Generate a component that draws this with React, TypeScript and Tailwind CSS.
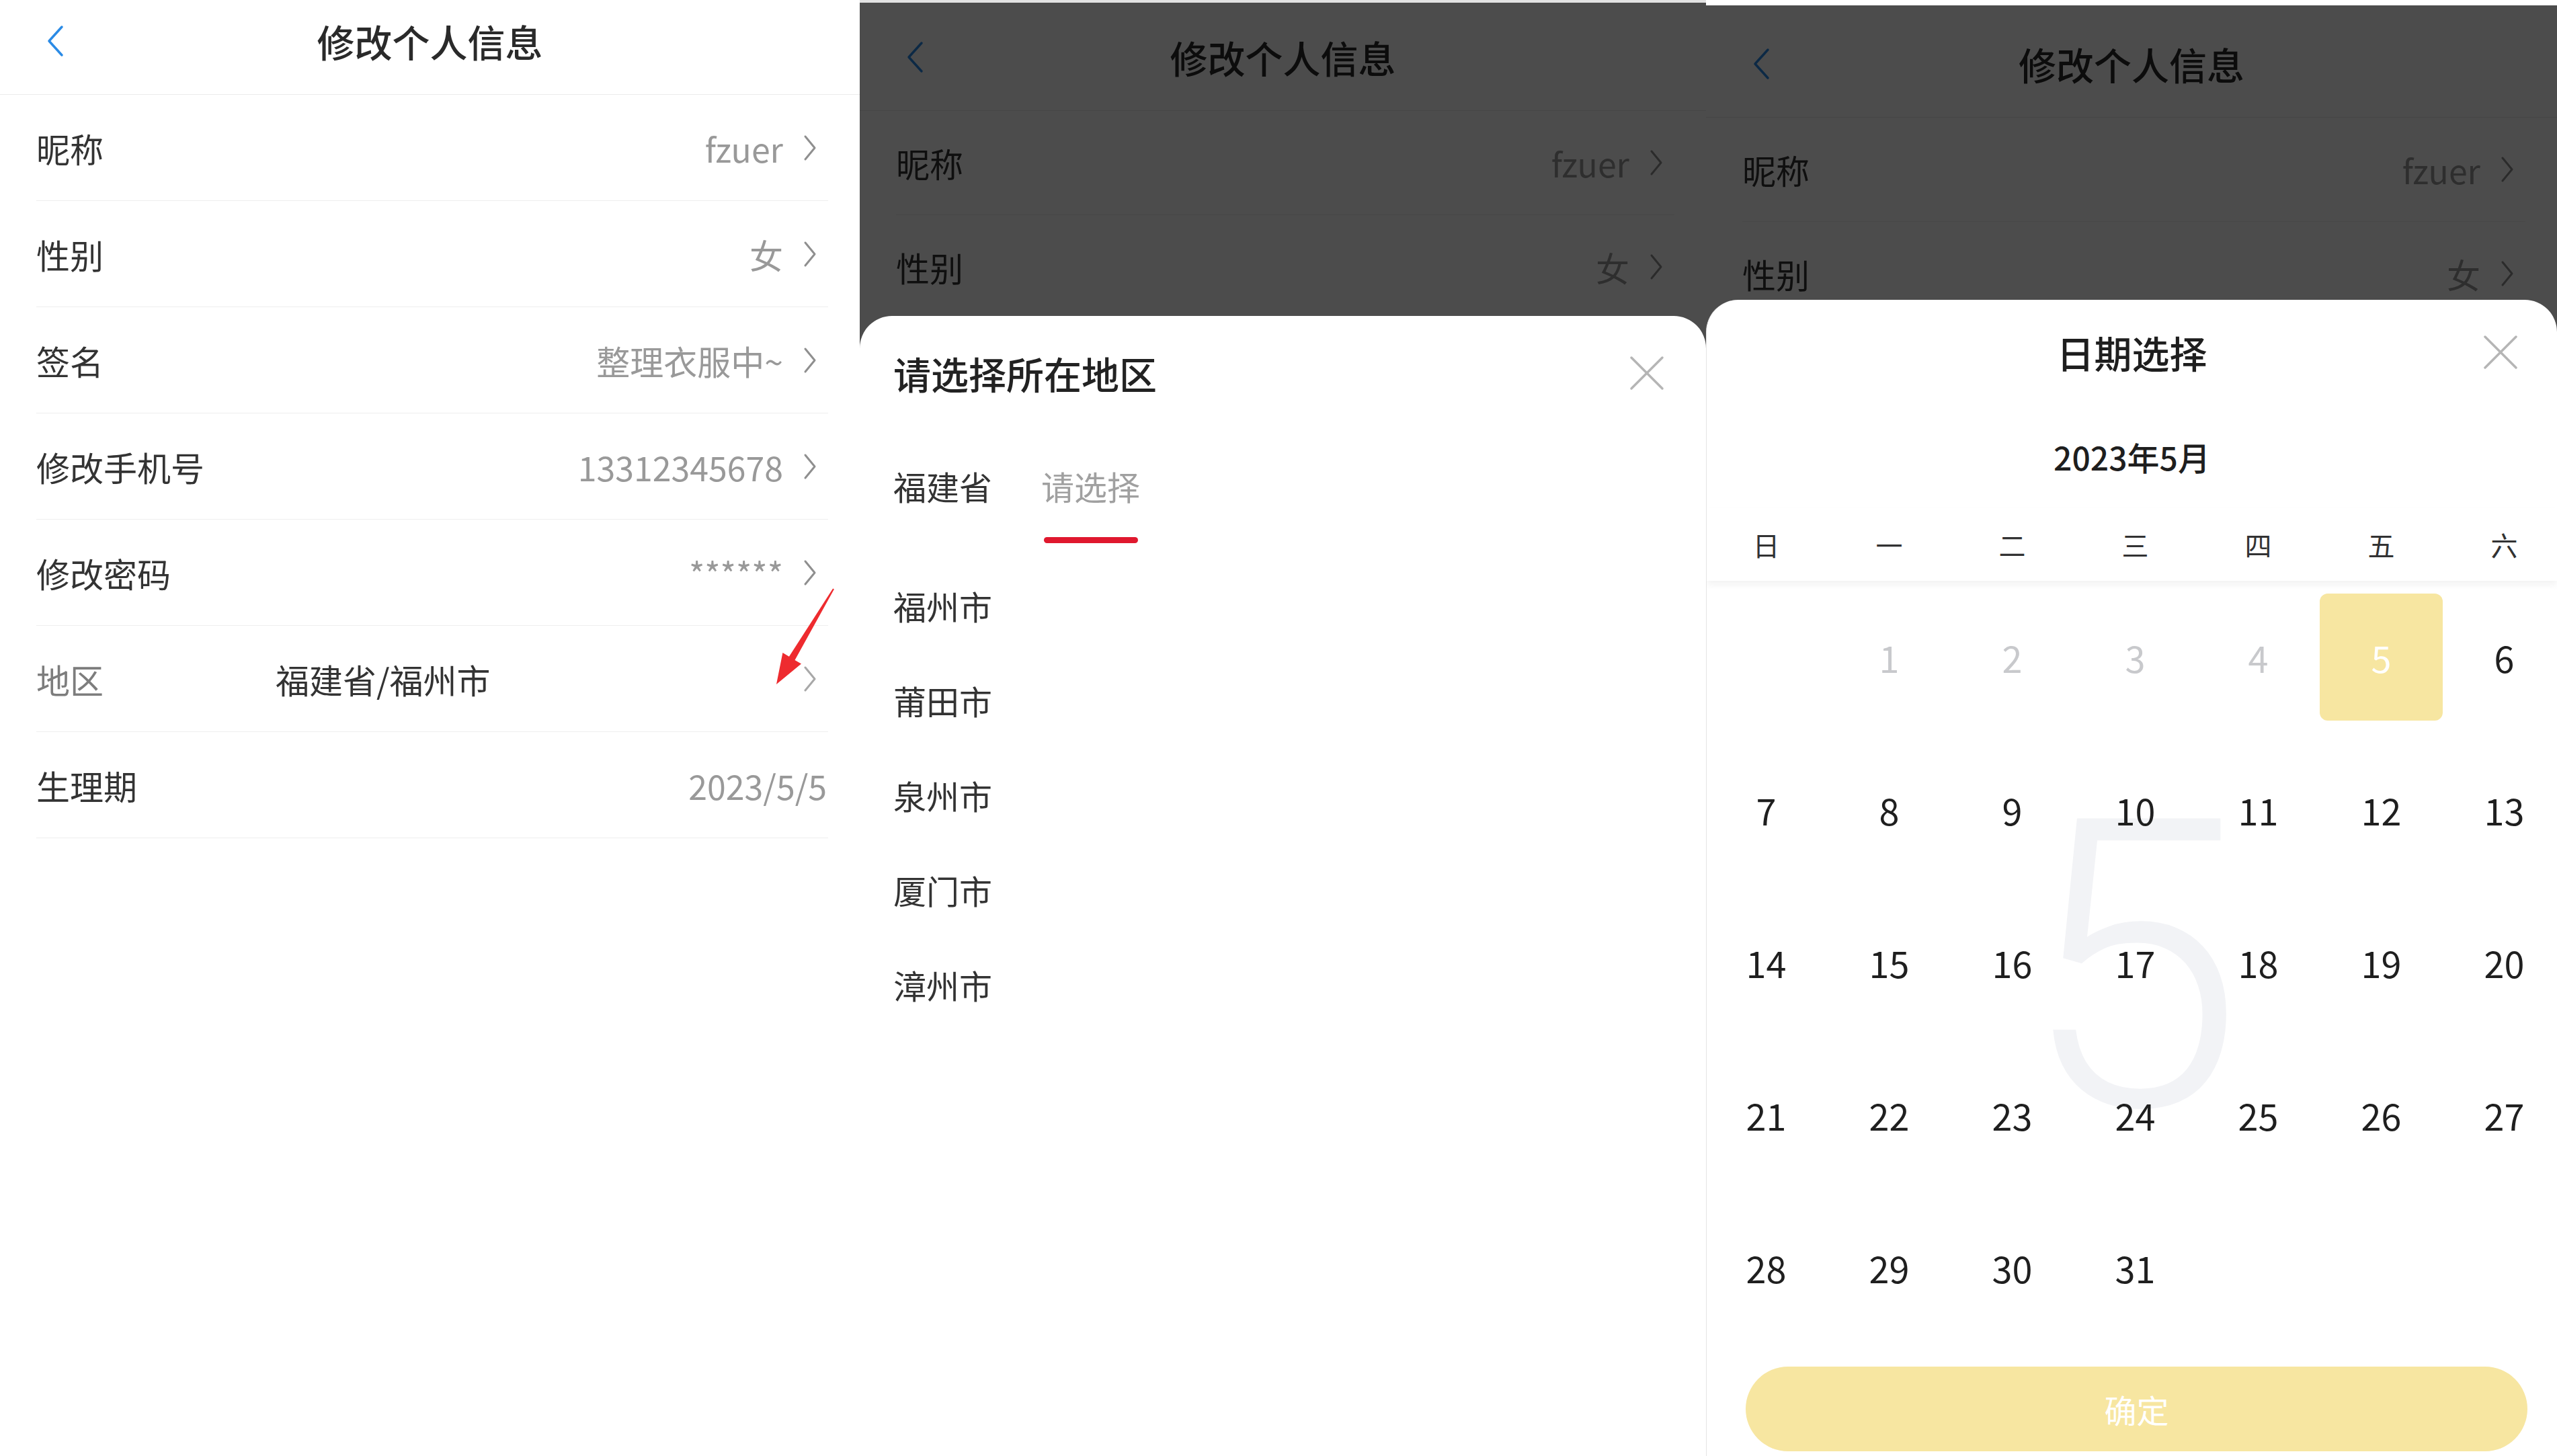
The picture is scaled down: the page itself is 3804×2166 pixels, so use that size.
import React from "react";

type Row = {
  label: string;
  value: string;
  arrow: boolean;
  region?: boolean;
};

const rows: Row[] = [
  { label: "昵称", value: "fzuer", arrow: true },
  { label: "性别", value: "女", arrow: true },
  { label: "签名", value: "整理衣服中~", arrow: true },
  { label: "修改手机号", value: "13312345678", arrow: true },
  { label: "修改密码", value: "******", arrow: true },
  { label: "地区", value: "福建省/福州市", arrow: true, region: true },
  { label: "生理期", value: "2023/5/5", arrow: false },
];

const cities = ["福州市", "莆田市", "泉州市", "厦门市", "漳州市"];
const weekdays = ["日", "一", "二", "三", "四", "五", "六"];

function ChevronRight({ className = "" }: { className?: string }) {
  return (
    <svg viewBox="0 0 20 40" className={`w-[20px] h-[40px] ${className}`} fill="none">
      <polyline points="3,3 17,20 3,37" stroke="currentColor" strokeWidth="3" strokeLinecap="round" strokeLinejoin="round" />
    </svg>
  );
}

function BackChevron() {
  return (
    <svg viewBox="0 0 28 48" className="w-[28px] h-[48px] text-[#2b8be6]" fill="none">
      <polyline points="24,3 5,24 24,45" stroke="currentColor" strokeWidth="3.5" strokeLinecap="round" strokeLinejoin="round" />
    </svg>
  );
}

function CloseIcon() {
  return (
    <svg viewBox="0 0 52 52" className="w-[52px] h-[52px] text-[#b5b5b5]" fill="none">
      <line x1="3" y1="3" x2="49" y2="49" stroke="currentColor" strokeWidth="3.5" strokeLinecap="round" />
      <line x1="49" y1="3" x2="3" y2="49" stroke="currentColor" strokeWidth="3.5" strokeLinecap="round" />
    </svg>
  );
}

// the profile list behind everything; tall = left panel spacing
function ProfilePage({ tall, count }: { tall: boolean; count: number }) {
  return (
    <div className="w-full">
      <div className="grid grid-cols-[1fr_auto_1fr] items-center h-[141px] pb-[18px] border-b border-[#ececec]">
        <div className="pl-[68px] flex items-center">
          <BackChevron />
        </div>
        <div className="text-[56px] font-medium text-[#2a2a2a] leading-none">修改个人信息</div>
        <div />
      </div>
      {rows.slice(0, count).map((r) => (
        <div
          key={r.label}
          className={`ml-[54px] mr-[47px] flex items-center border-b border-[#eeeeee] ${tall ? "h-[158px]" : "h-[155px]"}`}
        >
          <div className={`text-[50px] leading-none ${r.region ? "w-[356px] text-[#7d7d7d]" : "text-[#333333]"}`}>{r.label}</div>
          {r.region ? (
            <div className="flex-1 text-[50px] leading-none text-[#333333]">{r.value}</div>
          ) : (
            <div className="flex-1 text-right text-[50px] leading-none text-[#999999]">{r.value}</div>
          )}
          {r.arrow ? (
            <ChevronRight className={`ml-[30px] mr-[17px] ${r.region ? "text-[#a8a8a8]" : "text-[#8f8f8f]"}`} />
          ) : (
            <div className="w-[2px]" />
          )}
        </div>
      ))}
    </div>
  );
}

function RegionSheet() {
  return (
    <div className="absolute left-0 right-0 top-[470px] bottom-0 bg-white rounded-t-[48px]">
      <div className="flex items-center justify-between h-[170px] pl-[50px] pr-[62px]">
        <div className="text-[56px] font-medium text-[#222222] leading-none">请选择所在地区</div>
        <CloseIcon />
      </div>
      <div className="flex items-start gap-[73px] pl-[50px] pt-[53px] h-[190px]">
        <div className="flex flex-col items-center">
          <div className="text-[49px] leading-[60px] text-[#333333]">福建省</div>
        </div>
        <div className="flex flex-col items-center">
          <div className="text-[49px] leading-[60px] text-[#a0a0a0]">请选择</div>
          <div className="mt-[46px] w-[140px] h-[9px] rounded-full bg-[#e0182e]" />
        </div>
      </div>
      <div className="pl-[50px]">
        {cities.map((c) => (
          <div key={c} className="h-[141px] flex items-center text-[49px] text-[#333333] leading-none">
            {c}
          </div>
        ))}
      </div>
    </div>
  );
}

function DateSheet() {
  const cells: (number | null)[] = [null];
  for (let d = 1; d <= 31; d++) cells.push(d);
  while (cells.length < 35) cells.push(null);

  return (
    <div className="absolute left-0 right-0 top-[446px] bottom-0 bg-white rounded-t-[48px] border-l border-[#e4e4e4] overflow-hidden">
      <div className="grid grid-cols-[1fr_auto_1fr] items-center h-[156px]">
        <div />
        <div className="text-[56px] font-medium text-[#1e1e1e] leading-none">日期选择</div>
        <div className="justify-self-end mr-[58px] flex">
          <CloseIcon />
        </div>
      </div>
      <div className="h-[154px] flex items-center justify-center text-[48px] font-medium text-[#1e1e1e] leading-none">
        2023年5月
      </div>
      <div className="relative z-10 h-[108px] bg-white shadow-[0_6px_10px_rgba(0,0,0,0.05)]">
        <div className="w-[1281px] -ml-[3px] grid grid-cols-7 h-full items-center">
          {weekdays.map((w) => (
            <div key={w} className="text-center text-[40px] text-[#323233] leading-none">
              {w}
            </div>
          ))}
        </div>
      </div>
      <div className="relative">
        <div className="absolute inset-0 flex items-center justify-center pointer-events-none pt-[14px]">
          <span className="font-['Roboto',sans-serif] font-light text-[600px] leading-none text-[#f2f3f6]">5</span>
        </div>
        <div className="relative w-[1281px] -ml-[3px] grid grid-cols-7">
          {cells.map((d, i) => (
            <div key={i} className="h-[227px] flex items-center justify-center">
              {d === 5 ? (
                <div className="w-full h-[189px] rounded-[12px] bg-[#f7e6a1] flex items-center justify-center text-[54px] text-white leading-none">
                  5
                </div>
              ) : d ? (
                <span className={`text-[54px] leading-none ${d < 5 ? "text-[#c8c9cc]" : "text-[#1f1f1f]"}`}>{d}</span>
              ) : null}
            </div>
          ))}
        </div>
      </div>
      <div className="mt-[34px] ml-[58px] mr-[44px] h-[126px] rounded-full bg-[#f7e6a1] flex items-center justify-center text-[48px] text-white leading-none">
        确定
      </div>
    </div>
  );
}

function RedArrow() {
  return (
    <svg viewBox="0 0 110 165" className="absolute left-[1140px] top-[866px] w-[110px] h-[165px]">
      <polygon
        points="99.1,9.5 100.9,10.5 42.5,115.9 52,121.5 15,152 24.4,105.1 33.9,110.7"
        fill="#ee2b2f"
      />
    </svg>
  );
}

export default function App() {
  return (
    <div className="flex w-[3804px] h-[2166px] bg-white font-['Noto_Sans_CJK_SC','Noto_Sans',sans-serif] overflow-hidden">
      {/* left: profile page */}
      <div className="relative w-[1279px] h-full bg-white">
        <ProfilePage tall count={7} />
        <RedArrow />
      </div>

      {/* middle: region picker */}
      <div className="relative w-[1259px] h-full bg-white overflow-hidden">
        <div className="pt-[24px]">
          <ProfilePage tall={false} count={2} />
        </div>
        <div className="absolute inset-0 bg-black/70" />
        <div className="absolute top-0 left-0 right-0 h-[4px] bg-[#e2e2e2]" />
        <RegionSheet />
      </div>

      {/* right: date picker */}
      <div className="relative w-[1266px] h-full bg-white overflow-hidden">
        <div className="pt-[34px]">
          <ProfilePage tall={false} count={2} />
        </div>
        <div className="absolute inset-0 bg-black/70" />
        <div className="absolute top-0 left-0 right-0 h-[8px] bg-white" />
        <DateSheet />
      </div>
    </div>
  );
}
